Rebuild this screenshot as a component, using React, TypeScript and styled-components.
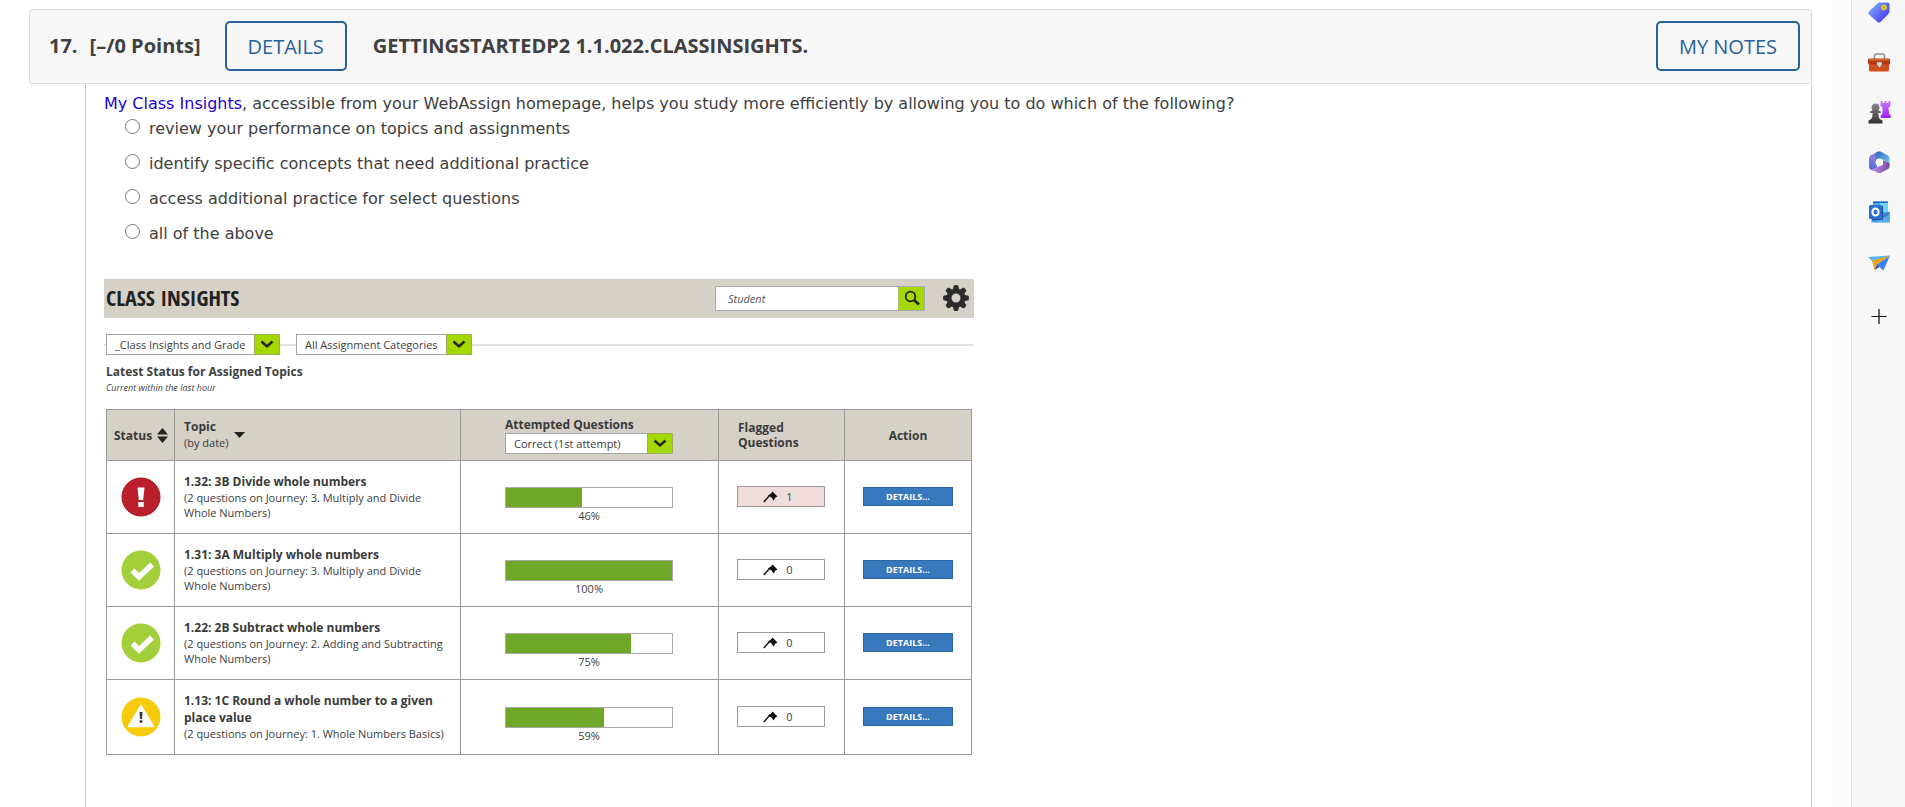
import React from 'react';
import styled, { createGlobalStyle } from 'styled-components';

const GlobalStyle = createGlobalStyle`
  *, *::before, *::after { box-sizing: border-box; }
  body { margin: 0; background: #fff; color: #404040; font-family: 'Open Sans', 'Noto Sans', sans-serif; }
  button, input, select { font-family: inherit; color: inherit; margin: 0; }
`;

const Page = styled.div`
  display: flex;
  min-height: 100vh;
`;

const Main = styled.main`
  flex: 1;
  min-width: 0;
  display: flex;
  flex-direction: column;
  padding: 9px 20px 0 29px;
`;

const Gutter = styled.div`
  width: 19px;
  background: #fcfcfc;
`;

const Sidebar = styled.nav`
  width: 54px;
  display: flex;
  flex-direction: column;
  align-items: center;
  gap: 26px;
  background: #f7f7f7;
  border-left: 1px solid #e2e2e2;
`;

const SideButton = styled.button`
  width: 24px;
  height: 24px;
  padding: 0;
  border: 0;
  background: none;
  svg { display: block; }
`;

const AddButton = styled(SideButton)`
  margin-top: 4px;
`;

const QuestionHeader = styled.header`
  display: flex;
  align-items: center;
  height: 75px;
  padding: 0 11px 1px 19px;
  background: #f7f7f7;
  border: 1px solid #dedede;
  border-radius: 3px;
  font-size: 20px;
  line-height: 28px;
  font-weight: 700;
`;

const Points = styled.span`
  margin: 0 24px 0 12px;
`;

const Title = styled.h2`
  flex: 1;
  margin: 0 26px;
  font-size: 20px;
  font-weight: 700;
`;

const OutlineButton = styled.button`
  height: 50px;
  padding: 0 21px;
  border: 2px solid #29619b;
  border-radius: 5px;
  background: transparent;
  color: #29619b;
  font-size: 20px;
  font-weight: 500;
`;

const QuestionBody = styled.section`
  flex: 1;
  margin-left: 56px;
  padding: 10px 18px 52px;
  border: 1px solid #ccc;
  border-width: 0 1px;
`;

const Prompt = styled.p`
  margin: 0;
  font: 16px/20px Verdana, 'DejaVu Sans', sans-serif;
`;

const PromptLink = styled.a`
  color: #2200cc;
  text-decoration: none;
`;

const Options = styled.div`
  display: flex;
  flex-direction: column;
  gap: 15px;
  padding: 5px 0 0 21px;
  font: 16px/20px Verdana, 'DejaVu Sans', sans-serif;
`;

const Option = styled.label`
  display: flex;
  gap: 9px;
`;

const Radio = styled.input`
  appearance: none;
  width: 15px;
  height: 15px;
  margin: 0;
  border: 1px solid #767676;
  border-radius: 50%;
  background: #fff;
  &:checked { border: 4px solid #29619b; }
`;

const Insights = styled.section`
  max-width: 870px;
  margin-top: 35px;
`;

const InsightsBar = styled.div`
  display: flex;
  align-items: center;
  height: 39px;
  padding: 0 5px 1px 2px;
  background: #d6d1c6;
`;

const InsightsTitle = styled.h3`
  flex: 1;
  margin: 0;
  padding-bottom: 2px;
  color: #222;
  font: 700 22px/30px 'Open Sans Condensed', 'Noto Sans ExtraCondensed', 'Liberation Sans Narrow', 'Open Sans', sans-serif;
`;

const Search = styled.form`
  display: flex;
  width: 210px;
  height: 25px;
  margin-right: 18px;
  border: 1px solid #aaa;
`;

const SearchInput = styled.input`
  flex: 1;
  min-width: 0;
  padding: 0 12px;
  border: 0;
  background: #fff;
  font-size: 11px;
  font-style: italic;
  &::placeholder { color: #555; opacity: 1; }
`;

const SearchButton = styled.button`
  display: grid;
  place-items: center;
  width: 26px;
  padding: 0;
  border: 0;
  border-left: 1px solid #a9b868;
  background: #a3d900;
`;

const IconButton = styled.button`
  display: block;
  padding: 0;
  border: 0;
  background: none;
  svg { display: block; }
`;

const Filters = styled.div`
  display: flex;
  align-items: center;
  margin-top: 16px;
`;

const Rule = styled.span<{ $width?: number }>`
  ${(p) => (p.$width ? `width: ${p.$width}px;` : 'flex: 1;')}
  height: 2px;
  background: #e2e0db;
`;

const SelectBox = styled.span<{ $width: number }>`
  position: relative;
  display: block;
  width: ${(p) => p.$width}px;
  height: 21px;
`;

const NativeSelect = styled.select`
  appearance: none;
  display: block;
  width: 100%;
  height: 100%;
  padding: 0 28px 0 8px;
  border: 1px solid #a3a3a3;
  border-radius: 0;
  background: #fff;
  font-size: 11px;
  line-height: 16px;
`;

const SelectArrow = styled.span`
  position: absolute;
  top: 0;
  right: 0;
  display: grid;
  place-items: center;
  width: 26px;
  height: 100%;
  border: 1px solid #9fae60;
  background: #a3d900;
  pointer-events: none;
`;

const StatusHeading = styled.h4`
  margin: 8px 0 0 2px;
  font-size: 12px;
  line-height: 17px;
  font-weight: 700;
`;

const StatusNote = styled.p`
  margin: 0 0 14px 2px;
  font-size: 9px;
  line-height: 15px;
  font-style: italic;
`;

const Table = styled.table`
  width: calc(100% - 4px);
  margin-left: 2px;
  table-layout: fixed;
  border-collapse: collapse;
  font-size: 11px;
  line-height: 15px;
`;

const Col = styled.col<{ $width: number }>`
  width: ${(p) => p.$width}px;
`;

const HeadCell = styled.th<{ $left?: number; $center?: boolean }>`
  height: 51px;
  padding: 0 0 0 ${(p) => p.$left ?? 0}px;
  border: 1px solid #999;
  background: #d6d1c6;
  color: #3a3a3a;
  font-size: 12px;
  font-weight: 700;
  text-align: ${(p) => (p.$center ? 'center' : 'left')};
`;

const SortRow = styled.span`
  display: flex;
  align-items: center;
  gap: 5px;
`;

const SortHint = styled.span`
  display: block;
  font-size: 11px;
  font-weight: 400;
  line-height: 17px;
`;

const AttemptedLabel = styled.label`
  display: block;
  line-height: 17px;
`;

const Cell = styled.td<{ $left?: number; $center?: boolean }>`
  height: 73px;
  padding: 0 0 1px ${(p) => p.$left ?? 0}px;
  border: 1px solid #999;
  text-align: ${(p) => (p.$center ? 'center' : 'left')};
  svg { vertical-align: middle; }
`;

const TopicCell = styled(Cell)`
  padding-top: 12px;
  padding-right: 12px;
  padding-bottom: 13px;
`;

const BarCell = styled(Cell)`
  padding-top: 16px;
`;

const TopicName = styled.strong`
  display: block;
  color: #3a3a3a;
  font-size: 12px;
  font-weight: 700;
  line-height: 17px;
`;

const Track = styled.div`
  width: 168px;
  height: 21px;
  border: 1px solid #aaa;
  background: #fff;
`;

const Fill = styled.div`
  height: 100%;
  background: #6fa728;
`;

const Percent = styled.div`
  width: 168px;
  text-align: center;
`;

const Flag = styled.span<{ $raised: boolean }>`
  display: flex;
  align-items: center;
  justify-content: center;
  gap: 8px;
  width: 88px;
  height: 21px;
  padding-right: 6px;
  border: 1px solid #999;
  background: ${(p) => (p.$raised ? '#f1dcdc' : '#fff')};
`;

const DetailButton = styled.button`
  display: block;
  width: 90px;
  height: 19px;
  padding: 0;
  border: 1px solid #2b66a8;
  background: #3878bd;
  color: #fff;
  font-size: 9px;
  font-weight: 700;
  line-height: 15px;
`;

const Chevron = () => (
  <svg width="14" height="9" viewBox="0 0 14 9" fill="none" stroke="#222" strokeWidth="2.4">
    <path d="M1.5 1.5 7 6.5l5.500-5" />
  </svg>
);

const Gear = () => (
  <svg width="26" height="26" viewBox="-13 -13 26 26" fill="#2b2b2b">
    {[0, 45, 90, 135, 180, 225, 270, 315].map((a) => (
      <path key={a} transform={`rotate(${a})`} d="M-3.200-8l1-4.500q2.200-1 4.400 0l1 4.500z" />
    ))}
    <circle r="7" fill="none" stroke="#2b2b2b" strokeWidth="5" />
  </svg>
);

const SearchIcon = () => (
  <svg width="16" height="16" viewBox="0 0 16 16" fill="none" stroke="#222">
    <circle cx="6.500" cy="6.500" r="4.800" strokeWidth="1.800" />
    <path d="M10 10l5 4.500" strokeWidth="2.600" />
  </svg>
);

const SortBoth = () => (
  <svg width="11" height="15" viewBox="0 0 11 15" fill="#222">
    <path d="M5.500 0 11 6.500H0zM0 8.500h11L5.500 15z" />
  </svg>
);

const SortDown = () => (
  <svg width="11" height="6" viewBox="0 0 11 6" fill="#222">
    <path d="M0 0h11L5.500 6z" />
  </svg>
);

const Pin = () => (
  <svg width="15" height="12" viewBox="0 0 15 12">
    <path d="M0.800 11 7 4" stroke="#222" strokeWidth="1.600" />
    <path d="M5 4.500 8 2.500 9.500 0.500 11.500 2.500 14.500 5.500 12.500 6.500 10.500 9.500 8.500 6.500z" fill="#111" />
  </svg>
);

type Status = 'alert' | 'ok' | 'warn';

const StatusIcon = ({ status }: { status: Status }) => {
  if (status === 'alert')
    return (
      <svg width="40" height="40" viewBox="0 0 40 40" role="img" aria-label="Needs attention">
        <circle cx="20" cy="20" r="19" fill="#bb1f2b" stroke="#a5121d" />
        <path d="M16.500 10.500h7l-1.300 12.500h-4.400z" fill="#fff" />
        <rect x="17.300" y="25" width="5.400" height="5" fill="#fff" />
      </svg>
    );
  if (status === 'ok')
    return (
      <svg width="40" height="40" viewBox="0 0 40 40" role="img" aria-label="On track">
        <circle cx="20" cy="20" r="19.500" fill="#a3cf3a" />
        <path d="M11.500 20.500l6.500 6.500L31 14.500" fill="none" stroke="#fff" strokeWidth="5.500" />
      </svg>
    );
  return (
    <svg width="40" height="40" viewBox="0 0 40 40" role="img" aria-label="Caution">
      <circle cx="20" cy="20" r="19.500" fill="#f6cb0c" />
      <path d="M20 8.500 32.500 29.500h-25z" fill="#fff" stroke="#fff" strokeWidth="1.500" strokeLinejoin="round" />
      <path d="M18.500 15h3l-.5 7h-2zM18.700 23.300h2.600v2.500h-2.600z" fill="#333" />
    </svg>
  );
};

const TagIcon = () => (
  <svg width="24" height="24" viewBox="0 0 24 24">
    <defs>
      <linearGradient id="tag" x1="0" y1="0.300" x2="0.800" y2="1">
        <stop offset="0" stopColor="#7ba6ff" />
        <stop offset="1" stopColor="#4436f0" />
      </linearGradient>
    </defs>
    <path d="M12.500 2.500h8q2 0 2 2v7q0 1-.8 2L13.500 22q-1.500 1.200-3 0L2 14.500q-1.200-1.500 0-3l8.500-8q1-1 2-1z" fill="url(#tag)" />
    <circle cx="17" cy="7.500" r="2" fill="#8d9a6a" stroke="#ffd400" strokeWidth="1.500" />
  </svg>
);

const CaseIcon = () => (
  <svg width="24" height="24" viewBox="0 0 24 24">
    <path d="M7.500 9V6q0-2 2-2h6q2 0 2 2v3" fill="none" stroke="#8c8c8c" strokeWidth="1.500" />
    <path d="M2 13h20v7q0 1.500-1.500 1.500h-17Q2 21.500 2 20z" fill="#d0501d" />
    <path d="M2 8.500h20q1 0 1 1V13q0 1.500-1.500 1.500h-19Q1 14.500 1 13V9.500q0-1 1-1z" fill="#b13a12" />
    <path d="M2 9h20v1.500H2z" fill="#e0682f" />
    <path d="M10 12h5v3l-2.500 2.500L10 15z" fill="#d6d6d6" stroke="#777" strokeWidth=".5" />
  </svg>
);

const ChessIcon = () => (
  <svg width="24" height="24" viewBox="0 0 24 24">
    <defs>
      <linearGradient id="pawn" x1="0" y1="0" x2="0" y2="1">
        <stop offset="0" stopColor="#8a8a8a" />
        <stop offset="1" stopColor="#303030" />
      </linearGradient>
      <linearGradient id="rook" x1="0" y1="0" x2="0" y2="1">
        <stop offset="0" stopColor="#c97bff" />
        <stop offset="1" stopColor="#9a22f5" />
      </linearGradient>
    </defs>
    <path d="M13.500 1h2v2h2V1h2v2h2V1h2v5l-2 2 .7 6 1.500 1.500V18h-10v-2.500L15.200 14l.5-6-2.200-2z" fill="url(#rook)" />
    <path d="M8.500 3.500a4 4 0 0 1 3 6.700l2.300 1.300v1.500h-2.500q0 4 1.500 6l2.700 1.500v3h-14v-3L4.200 19q1.500-2 1.500-6H3.200v-1.500l2.300-1.300a4 4 0 0 1 3-6.700z" fill="url(#pawn)" />
  </svg>
);

const OfficeIcon = () => (
  <svg width="24" height="24" viewBox="0 0 24 24">
    <defs>
      <linearGradient id="officeLeft" x1="0" y1="0" x2="0" y2="1">
        <stop offset="0" stopColor="#a77fdc" />
        <stop offset="1" stopColor="#4570d8" />
      </linearGradient>
      <linearGradient id="officeTop" x1="0" y1="0" x2="1" y2="1">
        <stop offset="0" stopColor="#2f62b8" />
        <stop offset="1" stopColor="#67cff6" />
      </linearGradient>
      <linearGradient id="officeBase" x1="0" y1="0" x2="1" y2="0">
        <stop offset="0" stopColor="#c994ee" />
        <stop offset="1" stopColor="#71479c" />
      </linearGradient>
    </defs>
    <path d="M10 2 3.500 5.500Q2 6.500 2 8v9q0 1.500 1.500 2.500l3 1.500 3.500-4V2z" fill="url(#officeLeft)" />
    <path d="M10 2q2.200-1.500 4.500 0l6.500 3.500Q22.500 6.500 22.500 8v5.500L15 9 8.500 12V4z" fill="url(#officeTop)" />
    <path d="M22.500 13v3.500q0 1.500-1.500 2.500l-6.500 3.500q-2.200 1.200-4.500 0L4.500 19.500 15.500 15V10z" fill="url(#officeBase)" />
    <circle cx="12.300" cy="12.300" r="3.800" fill="#fff" />
  </svg>
);

const OutlookIcon = () => (
  <svg width="24" height="24" viewBox="0 0 24 24">
    <path d="M6 1.500h15v12H6z" fill="#4aa9e8" />
    <path d="M6 1.500h15v1.500H6z" fill="#2368b4" />
    <path d="M13 3h8v9l-8 1z" fill="#6fd5fb" />
    <path d="M4.500 12h18v10.500h-18z" fill="#3f9be6" />
    <path d="M22.500 11.500v10l-8-5z" fill="#3a78c4" />
    <path d="M8 22.500 22.500 14v8.500z" fill="#5cb8f5" opacity=".7" />
    <path d="M15.500 6v13.500H5" fill="none" stroke="#1d4f94" />
    <rect x="2" y="5" width="13" height="14" rx="1.500" fill="#2a70cc" />
    <ellipse cx="8.500" cy="12" rx="3.100" ry="3.500" fill="none" stroke="#fff" strokeWidth="2" />
  </svg>
);

const PlaneIcon = () => (
  <svg width="24" height="24" viewBox="0 0 24 24">
    <path d="M1 7 23 5.500 7 13z" fill="#55b5ee" />
    <path d="M23 5.500 16.500 20.500 9.500 14.500z" fill="#3f82ee" />
    <path d="M5 10.500 23 5.500 10 14 7.500 20z" fill="#e9a51c" />
    <path d="M10 14.500 7.500 20l5-3z" fill="#2d4f9a" />
  </svg>
);

const PlusIcon = () => (
  <svg width="24" height="24" viewBox="0 0 24 24">
    <path d="M12 5v15" stroke="#666" strokeWidth="2" />
    <path d="M4.500 12.500h15" stroke="#111" />
  </svg>
);

const apps = [
  { name: 'Shopping', Icon: TagIcon },
  { name: 'Tools', Icon: CaseIcon },
  { name: 'Games', Icon: ChessIcon },
  { name: 'Microsoft 365', Icon: OfficeIcon },
  { name: 'Outlook', Icon: OutlookIcon },
  { name: 'Drop', Icon: PlaneIcon },
];

const options = [
  'review your performance on topics and assignments',
  'identify specific concepts that need additional practice',
  'access additional practice for select questions',
  'all of the above',
];

const topics: { status: Status; name: string; note: string; percent: number; flagged: number }[] = [
  { status: 'alert', name: '1.32: 3B Divide whole numbers', note: '(2 questions on Journey: 3. Multiply and Divide Whole Numbers)', percent: 46, flagged: 1 },
  { status: 'ok', name: '1.31: 3A Multiply whole numbers', note: '(2 questions on Journey: 3. Multiply and Divide Whole Numbers)', percent: 100, flagged: 0 },
  { status: 'ok', name: '1.22: 2B Subtract whole numbers', note: '(2 questions on Journey: 2. Adding and Subtracting Whole Numbers)', percent: 75, flagged: 0 },
  { status: 'warn', name: '1.13: 1C Round a whole number to a given place value', note: '(2 questions on Journey: 1. Whole Numbers Basics)', percent: 59, flagged: 0 },
];

const Select = ({ width, value, label, id }: { width: number; value: string; label?: string; id?: string }) => (
  <SelectBox $width={width}>
    <NativeSelect id={id} aria-label={label}>
      <option>{value}</option>
    </NativeSelect>
    <SelectArrow>
      <Chevron />
    </SelectArrow>
  </SelectBox>
);

export default function App() {
  return (
    <Page>
      <GlobalStyle />
      <Main>
        <QuestionHeader>
          <span>17.</span>
          <Points>[–/0 Points]</Points>
          <OutlineButton>DETAILS</OutlineButton>
          <Title>GETTINGSTARTEDP2 1.1.022.CLASSINSIGHTS.</Title>
          <OutlineButton>MY NOTES</OutlineButton>
        </QuestionHeader>
        <QuestionBody>
          <Prompt>
            <PromptLink href="#insights">My Class Insights</PromptLink>, accessible from your WebAssign homepage, helps you
            study more efficiently by allowing you to do which of the following?
          </Prompt>
          <Options role="radiogroup">
            {options.map((text) => (
              <Option key={text}>
                <Radio type="radio" name="answer" />
                {text}
              </Option>
            ))}
          </Options>
          <Insights id="insights">
            <InsightsBar>
              <InsightsTitle>CLASS INSIGHTS</InsightsTitle>
              <Search>
                <SearchInput type="text" placeholder="Student" aria-label="Student" />
                <SearchButton type="button" aria-label="Search">
                  <SearchIcon />
                </SearchButton>
              </Search>
              <IconButton aria-label="Settings">
                <Gear />
              </IconButton>
            </InsightsBar>
            <Filters>
              <Rule $width={2} />
              <Select width={174} value="_Class Insights and Grade" label="Class" />
              <Rule $width={16} />
              <Select width={176} value="All Assignment Categories" label="Category" />
              <Rule />
            </Filters>
            <StatusHeading>Latest Status for Assigned Topics</StatusHeading>
            <StatusNote>Current within the last hour</StatusNote>
            <Table>
              <colgroup>
                <Col $width={68} />
                <Col $width={286} />
                <Col $width={258} />
                <Col $width={126} />
                <Col $width={127} />
              </colgroup>
              <thead>
                <tr>
                  <HeadCell $left={7}>
                    <SortRow>
                      Status <SortBoth />
                    </SortRow>
                  </HeadCell>
                  <HeadCell $left={9}>
                    <SortRow>
                      <span>
                        Topic
                        <SortHint>(by date)</SortHint>
                      </span>
                      <SortDown />
                    </SortRow>
                  </HeadCell>
                  <HeadCell $left={44}>
                    <AttemptedLabel htmlFor="attempt">Attempted Questions</AttemptedLabel>
                    <Select width={168} value="Correct (1st attempt)" id="attempt" />
                  </HeadCell>
                  <HeadCell $left={19}>
                    Flagged
                    <br />
                    Questions
                  </HeadCell>
                  <HeadCell $center>Action</HeadCell>
                </tr>
              </thead>
              <tbody>
                {topics.map((t) => (
                  <tr key={t.name}>
                    <Cell $center>
                      <StatusIcon status={t.status} />
                    </Cell>
                    <TopicCell $left={9}>
                      <TopicName>{t.name}</TopicName>
                      {t.note}
                    </TopicCell>
                    <BarCell $left={44}>
                      <Track>
                        <Fill style={{ width: `${t.percent}%` }} />
                      </Track>
                      <Percent>{t.percent}%</Percent>
                    </BarCell>
                    <Cell $left={18}>
                      <Flag $raised={t.flagged > 0}>
                        <Pin />
                        {t.flagged}
                      </Flag>
                    </Cell>
                    <Cell $left={18}>
                      <DetailButton>DETAILS...</DetailButton>
                    </Cell>
                  </tr>
                ))}
              </tbody>
            </Table>
          </Insights>
        </QuestionBody>
      </Main>
      <Gutter />
      <Sidebar aria-label="Apps">
        {apps.map(({ name, Icon }) => (
          <SideButton key={name} aria-label={name}>
            <Icon />
          </SideButton>
        ))}
        <AddButton aria-label="Add">
          <PlusIcon />
        </AddButton>
      </Sidebar>
    </Page>
  );
}
